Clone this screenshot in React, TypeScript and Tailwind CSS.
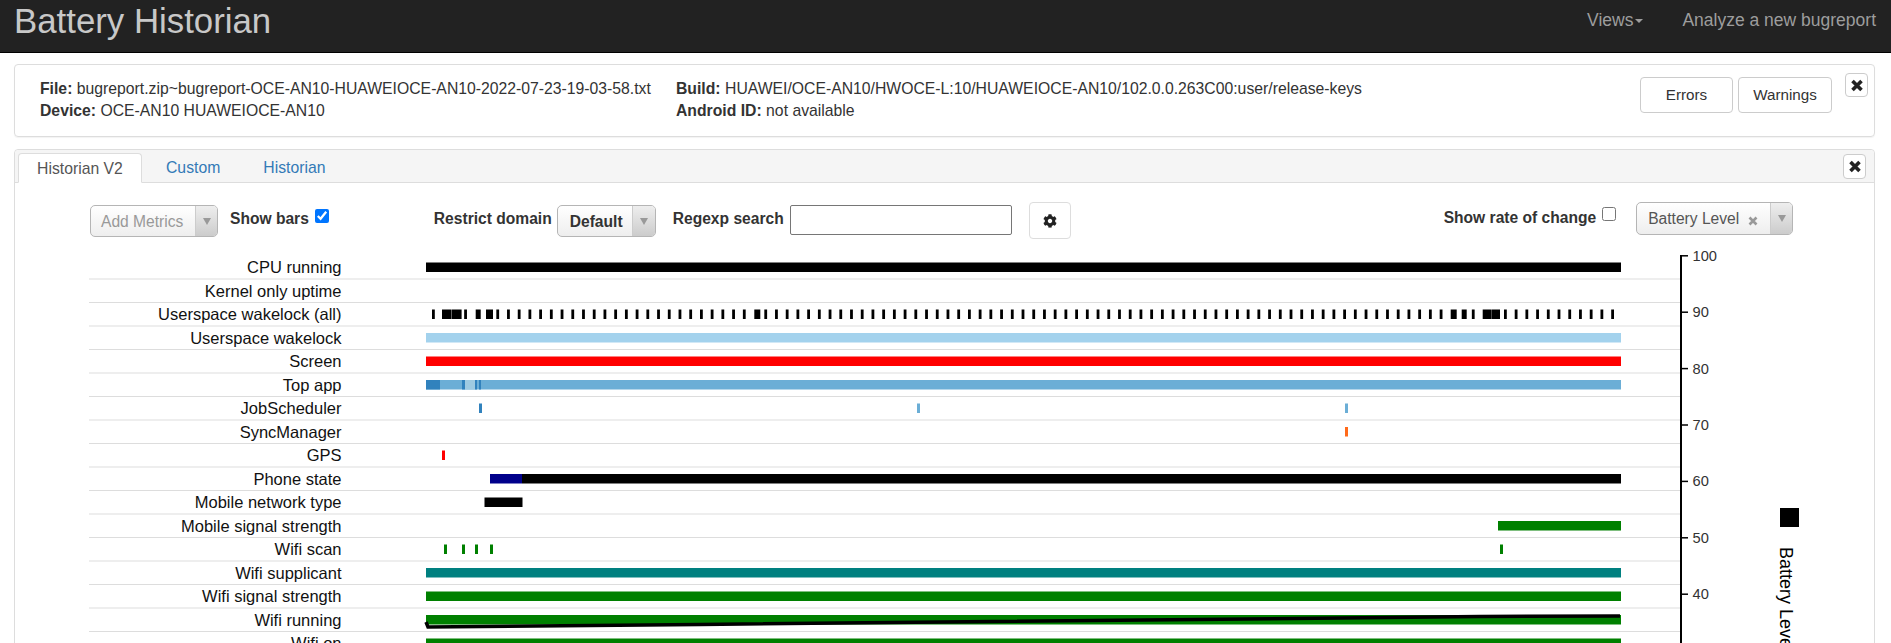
import React from 'react';
import { FaCog } from 'react-icons/fa';

const ROWS = [
  'CPU running',
  'Kernel only uptime',
  'Userspace wakelock (all)',
  'Userspace wakelock',
  'Screen',
  'Top app',
  'JobScheduler',
  'SyncManager',
  'GPS',
  'Phone state',
  'Mobile network type',
  'Mobile signal strength',
  'Wifi scan',
  'Wifi supplicant',
  'Wifi signal strength',
  'Wifi running',
  'Wifi on',
];

type Bar = [row: number, x: number, w: number, color: string];

const BLUE_DARK = '#3182bd';
const BLUE_MID = '#6baed6';
const BLUE_LIGHT = '#9ecae1';

const BARS: Bar[] = [
  [0, 426, 1195, '#000000'],
  [3, 426, 1195, '#a3d2ed'],
  [4, 426, 1195, '#ff0000'],
  [5, 426, 1195, BLUE_MID],
  [5, 426, 14, BLUE_DARK],
  [5, 462, 3, BLUE_DARK],
  [5, 465, 10, BLUE_LIGHT],
  [5, 475, 2, BLUE_DARK],
  [5, 479, 2, BLUE_DARK],
  [6, 479, 3, BLUE_DARK],
  [6, 917, 3, BLUE_MID],
  [6, 1345, 3, BLUE_MID],
  [7, 1345, 3, '#ff6a1a'],
  [8, 442, 3, '#ff0000'],
  [9, 490, 32, '#00008b'],
  [9, 522, 1099, '#000000'],
  [10, 484.5, 38, '#000000'],
  [11, 1498, 123, '#008000'],
  [12, 444, 3, '#008000'],
  [12, 462, 3, '#008000'],
  [12, 475, 3, '#008000'],
  [12, 490, 3, '#008000'],
  [12, 1500, 3, '#008000'],
  [13, 426, 1195, '#008080'],
  [14, 426, 1195, '#008000'],
  [15, 426, 1195, '#008000'],
  [16, 426, 1195, '#008000'],
];

// wider wakelock blocks, everything else is a regular 3px tick
const WAKE_BLOCKS: Record<number, [number, number]> = {
  1: [442, 9.6],
  2: [452, 9.6],
  4: [475.7, 5],
  5: [486, 7],
  30: [754.3, 6],
  95: [1450.7, 6],
  96: [1461.7, 5],
  98: [1482.7, 9],
  99: [1492, 8],
};

const wakeTicks: [number, number][] = Array.from({ length: 111 }, (_, k) => WAKE_BLOCKS[k] ?? [432 + k * 10.72, 2.8]);

const AXIS = [100, 90, 80, 70, 60, 50, 40, 30];

const Caret = () => (
  <svg width="8" height="7" viewBox="0 0 8 7" className="block">
    <path d="M0 0h8L4 7z" fill="#999999" />
  </svg>
);

const CloseGlyph = () => (
  <svg width="14" height="13" viewBox="0 0 14 13" className="block">
    <path d="M2.5 2 L11.5 11 M11.5 2 L2.5 11" stroke="#222222" strokeWidth="3.6" />
  </svg>
);

const SelectBox: React.FC<{ className: string; arrowWidth: string; children: React.ReactNode }> = ({
  className,
  arrowWidth,
  children,
}) => (
  <div
    className={`flex rounded-[5px] border border-[#b5b5b5] bg-linear-to-b from-white to-[#eeeeee] overflow-hidden ${className}`}
  >
    <div className="flex-1 flex items-center min-w-0">{children}</div>
    <div
      className={`flex items-center justify-center border-l border-[#cccccc] bg-linear-to-b from-[#eeeeee] to-[#cccccc] ${arrowWidth}`}
    >
      <Caret />
    </div>
  </div>
);

const Chart = () => (
  <svg viewBox="15 245 1859 398" className="block w-[1859px] h-[398px]" fontFamily="'Liberation Sans', Arial, sans-serif">
    {ROWS.slice(0, 16).map((_, i) => (
      <line key={i} x1="89" x2="1680" y1={279 + i * 23.5} y2={279 + i * 23.5} stroke="#dddddd" />
    ))}
    {ROWS.map((label, i) => (
      <text key={label} x="341.5" y={273 + i * 23.5} textAnchor="end" fontSize="16.5" fill="#111111">
        {label}
      </text>
    ))}
    {BARS.map(([row, x, w, color], i) => (
      <rect key={i} x={x} y={262.5 + row * 23.5} width={w} height="9.5" fill={color} />
    ))}
    {wakeTicks.map(([x, w], i) => (
      <rect key={i} x={x} y="309.5" width={w} height="9.5" fill="#000000" />
    ))}
    <polyline
      points="426,622 428,627 700,624.5 1480,616.5 1620,616"
      fill="none"
      stroke="#000000"
      strokeWidth="3.5"
    />
    <line x1="1681" x2="1681" y1="255" y2="643" stroke="#000000" strokeWidth="2" />
    {AXIS.map((v, i) => {
      const y = 255.8 + i * 56.4;
      return (
        <g key={v}>
          <line x1="1680" x2="1688" y1={y} y2={y} stroke="#000000" strokeWidth="1.5" />
          <text x="1692.5" y={y + 5} fontSize="14.67" fill="#333333">
            {v}
          </text>
        </g>
      );
    })}
    <rect x="1780" y="508" width="19" height="19" fill="#000000" />
    <text x="1779.5" y="547" fontSize="18" fill="#000000" transform="rotate(90 1779.5 547)">
      Battery Level
    </text>
  </svg>
);

export default function App() {
  return (
    <div className="h-[643px] overflow-hidden bg-white text-[15.75px] leading-[21px] text-[#333333] font-['Liberation_Sans',Arial,sans-serif]">
      <nav className="h-[53px] bg-[#222222] border-b border-black flex justify-between">
        <a className="ml-[14px] text-[34.8px] leading-[42px] text-[#c8c8c8]">Battery Historian</a>
        <div className="flex text-[17.5px] leading-[40px] text-[#9d9d9d] mr-[15px]">
          <span className="flex items-center h-[40px]">
            Views
            <span className="ml-[2px] mt-[2px] w-0 h-0 border-x-[4px] border-x-transparent border-t-[4px] border-t-[#9d9d9d]" />
          </span>
          <span className="ml-[39px]">Analyze a new bugreport</span>
        </div>
      </nav>

      <section className="ml-[14px] mr-[16px] mt-[11px] h-[73px] rounded-[4px] border border-[#dddddd] flex shadow-[0_1px_1px_rgba(0,0,0,0.05)]">
        <div className="w-[636px] ml-[25px] mt-[13px] shrink-0 leading-[22px]">
          <div>
            <b>File:</b> bugreport.zip~bugreport-OCE-AN10-HUAWEIOCE-AN10-2022-07-23-19-03-58.txt
          </div>
          <div>
            <b>Device:</b> OCE-AN10 HUAWEIOCE-AN10
          </div>
        </div>
        <div className="flex-1 mt-[13px] leading-[22px]">
          <div>
            <b>Build:</b> HUAWEI/OCE-AN10/HWOCE-L:10/HUAWEIOCE-AN10/102.0.0.263C00:user/release-keys
          </div>
          <div>
            <b>Android ID:</b> not available
          </div>
        </div>
        <button className="mt-[12px] pb-[2px] w-[93px] h-[36px] rounded-[4px] border border-[#cccccc] bg-white text-[15.2px]">
          Errors
        </button>
        <button className="ml-[5px] mt-[12px] pb-[2px] w-[94px] h-[36px] rounded-[4px] border border-[#cccccc] bg-white text-[15.2px]">
          Warnings
        </button>
        <button className="ml-[13px] mr-[6px] mt-[8px] w-[23px] h-[24px] rounded-[4px] border border-[#cccccc] bg-white flex items-center justify-center">
          <CloseGlyph />
        </button>
      </section>

      <section className="ml-[14px] mr-[16px] mt-[12px] h-[600px] rounded-[4px] border border-[#dddddd]">
        <div className="h-[33px] bg-[#f5f5f5] border-b border-[#dddddd] flex items-end rounded-t-[4px] relative">
          <div className="ml-[3px] w-[124px] h-[30px] -mb-[1px] bg-white border border-[#dddddd] border-b-white rounded-t-[4px] text-center leading-[29px] text-[#555555]">
            Historian V2
          </div>
          <div className="ml-[24px] h-[29px] leading-[29px] text-[#337ab7]">Custom</div>
          <div className="ml-[43px] h-[29px] leading-[29px] text-[#337ab7]">Historian</div>
          <button className="absolute right-[8px] top-[4px] w-[23px] h-[25px] rounded-[4px] border border-[#cccccc] bg-white flex items-center justify-center">
            <CloseGlyph />
          </button>
        </div>

        <div className="mt-[19px] h-[43px] flex items-start font-bold text-[15.6px]">
          <SelectBox className="ml-[75px] mt-[3px] w-[128px] h-[32px] font-normal text-[#999999]" arrowWidth="w-[22px]">
            <span className="pl-[10px]">Add Metrics</span>
          </SelectBox>
          <span className="ml-[12px] mt-[6px]">Show bars</span>
          <input type="checkbox" checked readOnly className="ml-[6px] mt-[7px] w-[14px] h-[14px]" />
          <span className="ml-[105px] mt-[6px]">Restrict domain</span>
          <SelectBox className="ml-[5px] mt-[3px] w-[99px] h-[32px]" arrowWidth="w-[23px]">
            <span className="pl-[12px]">Default</span>
          </SelectBox>
          <span className="ml-[17px] mt-[6px]">Regexp search</span>
          <input
            type="text"
            className="ml-[6px] mt-[3px] w-[222px] h-[30px] rounded-[2px] border border-[#767676] bg-white"
          />
          <button className="ml-[17px] w-[42px] h-[37px] rounded-[4px] border border-[#dddddd] bg-white flex items-center justify-center">
            <FaCog size={14} color="#222222" />
          </button>
          <span className="ml-[373px] mt-[5px]">Show rate of change</span>
          <input type="checkbox" readOnly className="ml-[6px] mt-[5px] w-[14px] h-[14px]" />
          <SelectBox className="ml-[20px] w-[157px] h-[33px] font-normal text-[#555555]" arrowWidth="w-[22px]">
            <span className="pl-[11px]">Battery Level</span>
            <svg width="10" height="10" viewBox="0 0 10 10" className="ml-[9px] mt-[4px]">
              <path d="M1.5 1.5 L8.5 8.5 M8.5 1.5 L1.5 8.5" stroke="#999999" strokeWidth="2.6" />
            </svg>
          </SelectBox>
        </div>

        <Chart />
      </section>
    </div>
  );
}
